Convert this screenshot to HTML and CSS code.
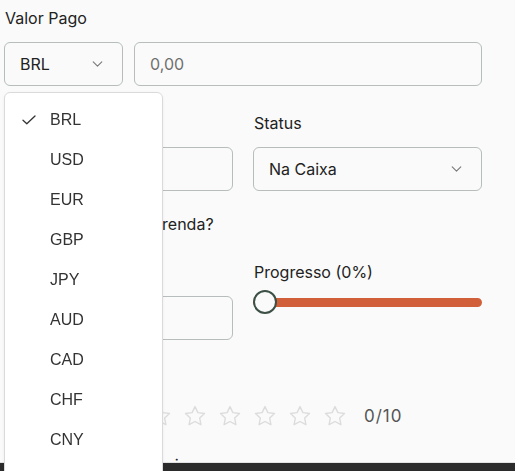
FILE: index.html
```html
<!DOCTYPE html>
<html lang="pt">
<head>
<meta charset="utf-8">
<title>Item</title>
<link rel="stylesheet" href="styles.css">
</head>
<body>
<div class="form">
  <div class="field">
    <div class="label">Valor Pago</div>
    <div class="money">
      <div class="select currency">
        <span>BRL</span>
        <svg class="chev" viewBox="0 0 12 7" width="11" height="6"><path d="M1 1l5 5 5-5" fill="none" stroke="#7a7a7a" stroke-width="1.3" stroke-linecap="round" stroke-linejoin="round"/></svg>
      </div>
      <div class="input placeholder">0,00</div>
    </div>
  </div>

  <div class="grid">
    <div class="field">
      <div class="label">Quantidade</div>
      <div class="input">1</div>
    </div>
    <div class="field">
      <div class="label">Status</div>
      <div class="select">
        <span>Na Caixa</span>
        <svg class="chev" viewBox="0 0 12 7" width="11" height="6"><path d="M1 1l5 5 5-5" fill="none" stroke="#7a7a7a" stroke-width="1.3" stroke-linecap="round" stroke-linejoin="round"/></svg>
      </div>
    </div>
  </div>

  <div class="check-row">
    <span class="box"></span>
    <span class="check-text">Recebido como prenda?</span>
  </div>

  <div class="grid">
    <div class="field">
      <div class="label">Localização</div>
      <div class="input"></div>
    </div>
    <div class="field">
      <div class="label">Progresso (0%)</div>
      <div class="slider">
        <div class="track"></div>
        <div class="thumb"></div>
      </div>
    </div>
  </div>

  <div class="field rating">
    <div class="label">Avaliação</div>
    <div class="stars">
      <svg class="star" viewBox="0 0 24 24"><path d="M12 2.6l2.9 6 6.6.9-4.8 4.6 1.2 6.6L12 17.5l-5.9 3.2 1.2-6.6-4.8-4.6 6.6-.9z"/></svg>
      <svg class="star" viewBox="0 0 24 24"><path d="M12 2.6l2.9 6 6.6.9-4.8 4.6 1.2 6.6L12 17.5l-5.9 3.2 1.2-6.6-4.8-4.6 6.6-.9z"/></svg>
      <svg class="star" viewBox="0 0 24 24"><path d="M12 2.6l2.9 6 6.6.9-4.8 4.6 1.2 6.6L12 17.5l-5.9 3.2 1.2-6.6-4.8-4.6 6.6-.9z"/></svg>
      <svg class="star" viewBox="0 0 24 24"><path d="M12 2.6l2.9 6 6.6.9-4.8 4.6 1.2 6.6L12 17.5l-5.9 3.2 1.2-6.6-4.8-4.6 6.6-.9z"/></svg>
      <svg class="star" viewBox="0 0 24 24"><path d="M12 2.6l2.9 6 6.6.9-4.8 4.6 1.2 6.6L12 17.5l-5.9 3.2 1.2-6.6-4.8-4.6 6.6-.9z"/></svg>
      <svg class="star" viewBox="0 0 24 24"><path d="M12 2.6l2.9 6 6.6.9-4.8 4.6 1.2 6.6L12 17.5l-5.9 3.2 1.2-6.6-4.8-4.6 6.6-.9z"/></svg>
      <svg class="star" viewBox="0 0 24 24"><path d="M12 2.6l2.9 6 6.6.9-4.8 4.6 1.2 6.6L12 17.5l-5.9 3.2 1.2-6.6-4.8-4.6 6.6-.9z"/></svg>
      <svg class="star" viewBox="0 0 24 24"><path d="M12 2.6l2.9 6 6.6.9-4.8 4.6 1.2 6.6L12 17.5l-5.9 3.2 1.2-6.6-4.8-4.6 6.6-.9z"/></svg>
      <svg class="star" viewBox="0 0 24 24"><path d="M12 2.6l2.9 6 6.6.9-4.8 4.6 1.2 6.6L12 17.5l-5.9 3.2 1.2-6.6-4.8-4.6 6.6-.9z"/></svg>
      <svg class="star" viewBox="0 0 24 24"><path d="M12 2.6l2.9 6 6.6.9-4.8 4.6 1.2 6.6L12 17.5l-5.9 3.2 1.2-6.6-4.8-4.6 6.6-.9z"/></svg>
      <span class="score">0/10</span>
    </div>
  </div>

  <div class="field notes">
    <div class="label">Observações e manuais</div>
  </div>
</div>

<div class="footer-bar"></div>

<ul class="menu">
  <li class="selected"><svg class="tick" viewBox="0 0 14 10" width="14" height="10"><path d="M1 5.2l3.8 3.6L13 1" fill="none" stroke="#333" stroke-width="1.3" stroke-linecap="round" stroke-linejoin="round"/></svg>BRL</li>
  <li>USD</li>
  <li>EUR</li>
  <li>GBP</li>
  <li>JPY</li>
  <li>AUD</li>
  <li>CAD</li>
  <li>CHF</li>
  <li>CNY</li>
  <li>HKD</li>
</ul>
</body>
</html>
```
FILE: styles.css
```css
* { box-sizing: border-box; }

html, body {
  margin: 0;
  padding: 0;
  background: #fafafa;
  height: 100%;
  overflow: hidden;
}

body {
  font-family: Inter, "Noto Sans", sans-serif;
  font-size: 16px;
  color: #222;
}

.form {
  width: 482px;
  padding: 6px 0 0 4px;
  display: flex;
  flex-direction: column;
}

.label {
  line-height: 24px;
  height: 24px;
  margin-bottom: 12px;
  padding-left: 1px;
  white-space: nowrap;
}

.money {
  display: flex;
  gap: 11px;
}

.select, .input {
  height: 44px;
  border: 1px solid #b6bdbc;
  border-radius: 6px;
  display: flex;
  align-items: center;
  padding: 0 15px;
  color: #222;
}

.select {
  justify-content: space-between;
  padding-right: 19px;
}

.currency {
  width: 119px;
  flex: none;
}

.money .input {
  flex: 1;
}

.placeholder {
  color: #6f6f6f;
}

.grid {
  display: grid;
  grid-template-columns: 1fr 1fr;
  column-gap: 20px;
  margin-top: 25px;
}

.check-row {
  margin-top: 21px;
  height: 24px;
  display: flex;
  align-items: center;
  gap: 8px;
  padding-left: 0;
}

.box {
  width: 18px;
  height: 18px;
  border: 1px solid #b6bdbc;
  border-radius: 4px;
}

.check-text {
  line-height: 24px;
}

.check-row + .grid {
  margin-top: 24px;
}

.slider {
  position: relative;
  height: 24px;
  margin-top: -6px;
  display: flex;
  align-items: center;
}

.track {
  width: 100%;
  height: 9px;
  border-radius: 5px;
  background: #d05f3a;
}

.thumb {
  position: absolute;
  left: 0;
  top: 0;
  width: 24px;
  height: 24px;
  border-radius: 50%;
  background: #fafafa;
  border: 2px solid #3c5046;
}

.rating {
  margin-top: 24px;
}

.rating .label {
  margin-bottom: 16px;
}

.stars {
  display: flex;
  align-items: center;
  gap: 11px;
  padding-left: 4px;
  height: 24px;
}

.star {
  width: 24px;
  height: 24px;
  flex: none;
  fill: none;
  stroke: #dcdcdc;
  stroke-width: 1.4;
  stroke-linejoin: round;
}

.score {
  margin-left: 6px;
  color: #555;
  font-family: Inter, sans-serif;
  font-size: 17px;
  letter-spacing: 1px;
}

.notes {
  margin-top: 25px;
}

.footer-bar {
  position: fixed;
  left: 0;
  right: 0;
  bottom: 0;
  height: 9px;
  background: #2b2b2b;
  border-top: 1px solid #e2e2e2;
  z-index: 2;
}

.menu {
  position: absolute;
  left: 4px;
  top: 92px;
  width: 159px;
  height: 420px;
  margin: 0;
  padding: 7px 0 0;
  list-style: none;
  background: #fff;
  border: 1px solid #dadada;
  border-radius: 6px;
  box-shadow: 0 1px 3px rgba(0,0,0,0.06);
  font-family: "Liberation Sans", Arial, sans-serif;
  font-size: 16px;
  color: #333;
  z-index: 5;
}

.menu li {
  height: 40px;
  line-height: 40px;
  padding-left: 45px;
  position: relative;
}

.tick {
  position: absolute;
  left: 17px;
  top: 15px;
}
```
